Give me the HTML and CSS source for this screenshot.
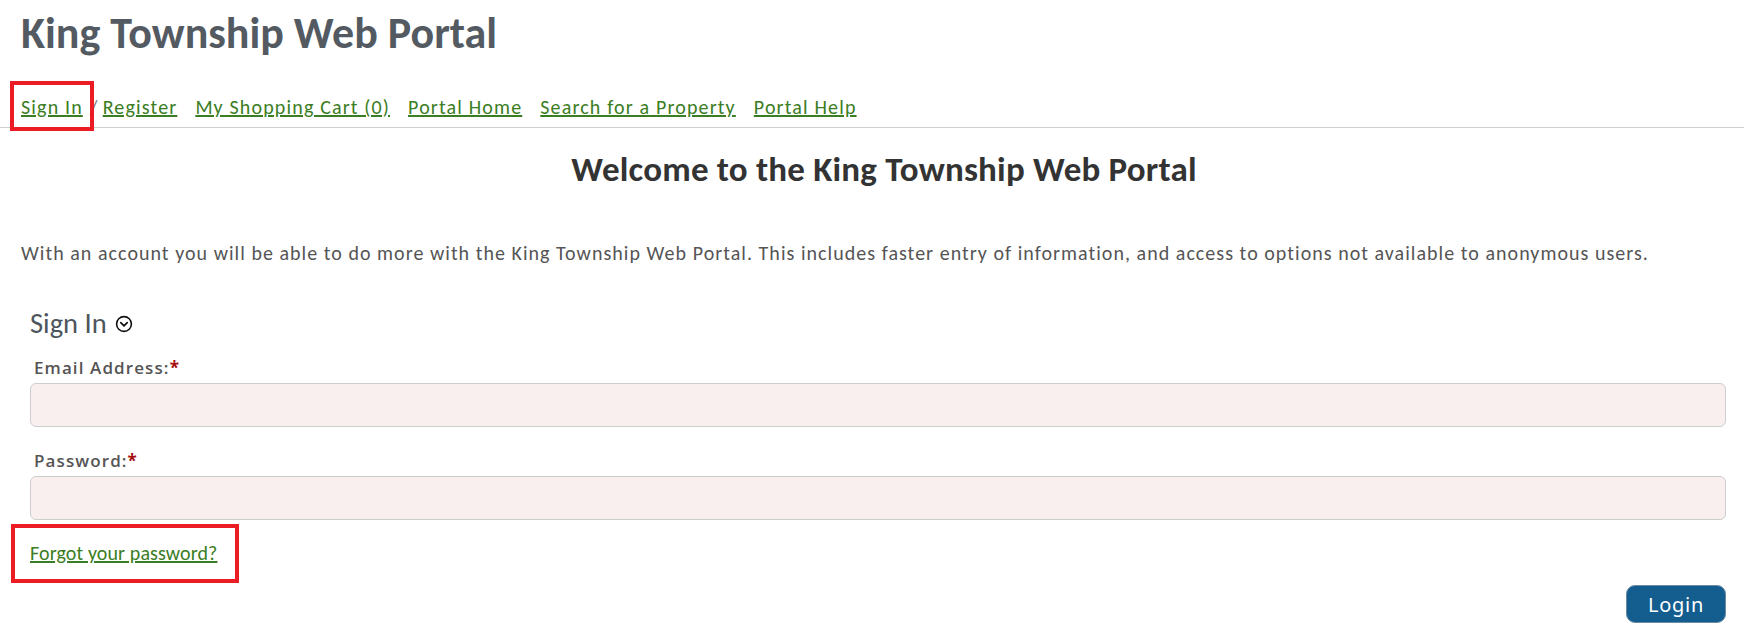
FILE: index.html
```html
<!DOCTYPE html>
<html lang="en">
<head>
<meta charset="utf-8">
<title>King Township Web Portal</title>
<link rel="stylesheet" href="styles.css">
</head>
<body>
<div class="page">
  <header class="header">
    <h1 class="site-title">King Township Web Portal</h1>
    <nav class="nav">
      <span class="nav-auth"><a href="#" class="nav-link">Sign In</a><span class="sep">/</span><a href="#" class="nav-link">Register</a></span>
      <a href="#" class="nav-link">My Shopping Cart (0)</a>
      <a href="#" class="nav-link">Portal Home</a>
      <a href="#" class="nav-link">Search for a Property</a>
      <a href="#" class="nav-link">Portal Help</a>
      <span class="highlight highlight-signin"></span>
    </nav>
  </header>
  <main class="main">
    <h2 class="welcome">Welcome to the King Township Web Portal</h2>
    <p class="intro">With an account you will be able to do more with the King Township Web Portal. This includes faster entry of information, and access to options not available to anonymous users.</p>
    <section class="signin">
      <h3 class="signin-title">Sign In
        <svg class="chev" width="18" height="18" viewBox="0 0 18 18" aria-hidden="true"><circle cx="9" cy="9" r="7.4" fill="none" stroke="#111" stroke-width="1.6"/><path d="M5.8 7.6 L9 10.8 L12.2 7.6" fill="none" stroke="#111" stroke-width="1.7" stroke-linecap="round" stroke-linejoin="round"/></svg>
      </h3>
      <label class="field-label" for="email">Email Address:<span class="req">*</span></label>
      <input class="field-input" id="email" type="text">
      <label class="field-label field-label-pw" for="pw">Password:<span class="req">*</span></label>
      <input class="field-input" id="pw" type="password">
      <div class="forgot-row">
        <a href="#" class="forgot">Forgot your password?</a>
        <span class="highlight highlight-forgot"></span>
      </div>
      <div class="actions">
        <button class="login-btn" type="button">Login</button>
      </div>
    </section>
  </main>
</div>
</body>
</html>
```

FILE: styles.css
```css
html, body {
  margin: 0;
  padding: 0;
  background: #ffffff;
}
body {
  font-family: "Carlito", "Lato", "Liberation Sans", sans-serif;
  color: #555;
}
.page {
  width: 1744px;
}
.header {
  padding-top: 7px;
}
.site-title {
  margin: 0;
  padding-left: 21px;
  font-size: 44px;
  line-height: 52px;
  font-weight: 700;
  color: #535a61;
}
.nav {
  position: relative;
  margin-top: 36px;
  padding: 0 0 8px 21px;
  border-bottom: 1px solid #cfcfcf;
  display: flex;
  gap: 18px;
  font-size: 20px;
  line-height: 24px;
  letter-spacing: 1.15px;
}
.nav-auth {
  display: flex;
}
.sep {
  color: #777;
  padding: 0 4px 0 7px;
}
.nav-link {
  color: #3b7d23;
  text-decoration: underline;
}
.highlight {
  position: absolute;
  border: 4px solid #ec1c24;
  box-sizing: border-box;
}
.highlight-signin {
  left: 10px;
  top: -14px;
  width: 84px;
  height: 50px;
}
.welcome {
  margin: 19px 0 0;
  text-align: center;
  padding-left: 24px;
  font-size: 35px;
  line-height: 44px;
  font-weight: 700;
  letter-spacing: 0.2px;
  color: #333;
}
.intro {
  margin: 50px 0 0;
  padding-left: 21px;
  font-size: 20px;
  line-height: 24px;
  letter-spacing: 1.03px;
  color: #555;
}
.signin {
  margin-top: 42px;
  padding: 0 18px 0 30px;
}
.signin-title {
  margin: 0;
  font-size: 28.5px;
  line-height: 34px;
  font-weight: 400;
  color: #4d555c;
  display: flex;
  align-items: center;
  gap: 8px;
}
.chev {
  display: block;
}
.field-label {
  display: block;
  margin-top: 16px;
  padding-left: 4px;
  font-family: "Open Sans", "Noto Sans", sans-serif;
  font-size: 17px;
  line-height: 22px;
  font-weight: 600;
  letter-spacing: 1.1px;
  color: #555;
}
.field-label-pw {
  margin-top: 23px;
}
.req {
  color: #a50d0d;
  font-weight: 700;
}
.field-input {
  display: block;
  box-sizing: border-box;
  width: 100%;
  height: 44px;
  margin-top: 4px;
  background: #f9efef;
  border: 1px solid #cdcdcd;
  border-radius: 6px;
  font-size: 16px;
  padding: 0 10px;
}
.forgot-row {
  position: relative;
  margin-top: 21px;
  font-size: 20px;
  line-height: 24px;
  letter-spacing: 0.1px;
}
.forgot {
  color: #3b7d23;
  text-decoration: underline;
}
.highlight-forgot {
  left: -19px;
  top: -17px;
  width: 228px;
  height: 59px;
}
.actions {
  display: flex;
  justify-content: flex-end;
  margin-top: 20px;
}
.login-btn {
  width: 100px;
  height: 38px;
  background: #135d8f;
  border: 1px solid #6d8ba3;
  border-radius: 9px;
  color: #fff;
  font-family: "Noto Sans", "Open Sans", sans-serif;
  font-size: 20px;
  letter-spacing: 0.7px;
  padding: 0;
  cursor: pointer;
}
```
